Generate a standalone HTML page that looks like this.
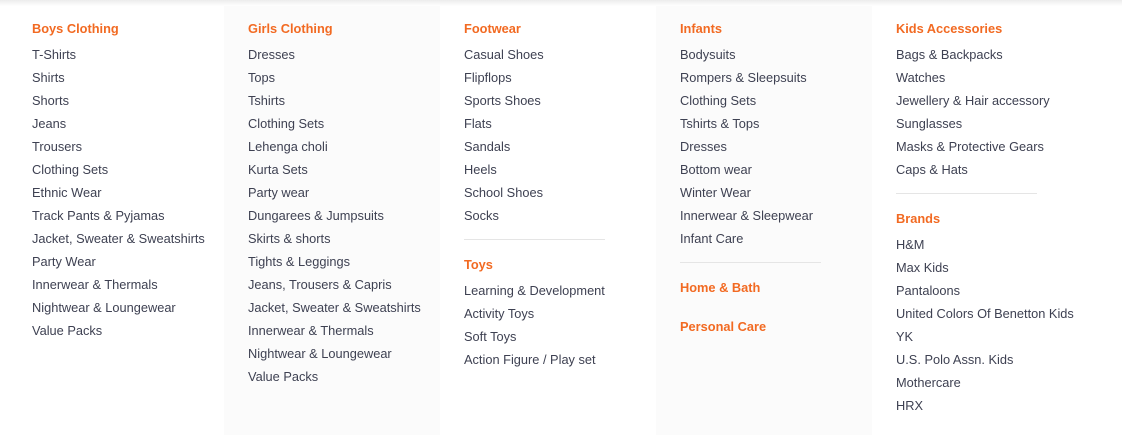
<!DOCTYPE html>
<html><head><meta charset="utf-8"><style>
body{margin:0;width:1122px;height:435px;position:relative;background:#fff;font-family:"Liberation Sans",sans-serif;overflow:hidden}
.shadow{position:absolute;left:0;top:0;width:1122px;height:6px;background:linear-gradient(#ececec,rgba(255,255,255,0))}
.bg{position:absolute;top:6px;height:429px;width:216px;background:#fbfbfb}
.h{position:absolute;white-space:nowrap;font-size:12.8px;font-weight:bold;color:#f26a22;line-height:23px}
.i{position:absolute;white-space:nowrap;font-size:12.8px;color:#3e4152;line-height:23px}
.d{position:absolute;height:1px;background:#e5e5e5}
</style></head><body>
<div class="shadow"></div>
<div class="bg" style="left:224px"></div>
<div class="bg" style="left:656px"></div>
<script>
function H(x,y,t){document.write('<div class="h" style="left:'+x+'px;top:'+(y-11.5)+'px">'+t+'</div>')}
function L(x,y,arr){arr.forEach((t,k)=>document.write('<div class="i" style="left:'+x+'px;top:'+(y+23*k-11.5)+'px">'+t+'</div>'))}
function D(x,y,w){document.write('<div class="d" style="left:'+x+'px;top:'+y+'px;width:'+w+'px"></div>')}
H(32,28,"Boys Clothing");
L(32,54,["T-Shirts","Shirts","Shorts","Jeans","Trousers","Clothing Sets","Ethnic Wear","Track Pants &amp; Pyjamas","Jacket, Sweater &amp; Sweatshirts","Party Wear","Innerwear &amp; Thermals","Nightwear &amp; Loungewear","Value Packs"]);
H(248,28,"Girls Clothing");
L(248,54,["Dresses","Tops","Tshirts","Clothing Sets","Lehenga choli","Kurta Sets","Party wear","Dungarees &amp; Jumpsuits","Skirts &amp; shorts","Tights &amp; Leggings","Jeans, Trousers &amp; Capris","Jacket, Sweater &amp; Sweatshirts","Innerwear &amp; Thermals","Nightwear &amp; Loungewear","Value Packs"]);
H(464,28,"Footwear");
L(464,54,["Casual Shoes","Flipflops","Sports Shoes","Flats","Sandals","Heels","School Shoes","Socks"]);
D(464,239,141);
H(464,264,"Toys");
L(464,290,["Learning &amp; Development","Activity Toys","Soft Toys","Action Figure / Play set"]);
H(680,28,"Infants");
L(680,54,["Bodysuits","Rompers &amp; Sleepsuits","Clothing Sets","Tshirts &amp; Tops","Dresses","Bottom wear","Winter Wear","Innerwear &amp; Sleepwear","Infant Care"]);
D(680,262,141);
H(680,287,"Home &amp; Bath");
H(680,326,"Personal Care");
H(896,28,"Kids Accessories");
L(896,54,["Bags &amp; Backpacks","Watches","Jewellery &amp; Hair accessory","Sunglasses","Masks &amp; Protective Gears","Caps &amp; Hats"]);
D(896,193,141);
H(896,218,"Brands");
L(896,244,["H&amp;M","Max Kids","Pantaloons","United Colors Of Benetton Kids","YK","U.S. Polo Assn. Kids","Mothercare","HRX"]);
</script>
</body></html>
